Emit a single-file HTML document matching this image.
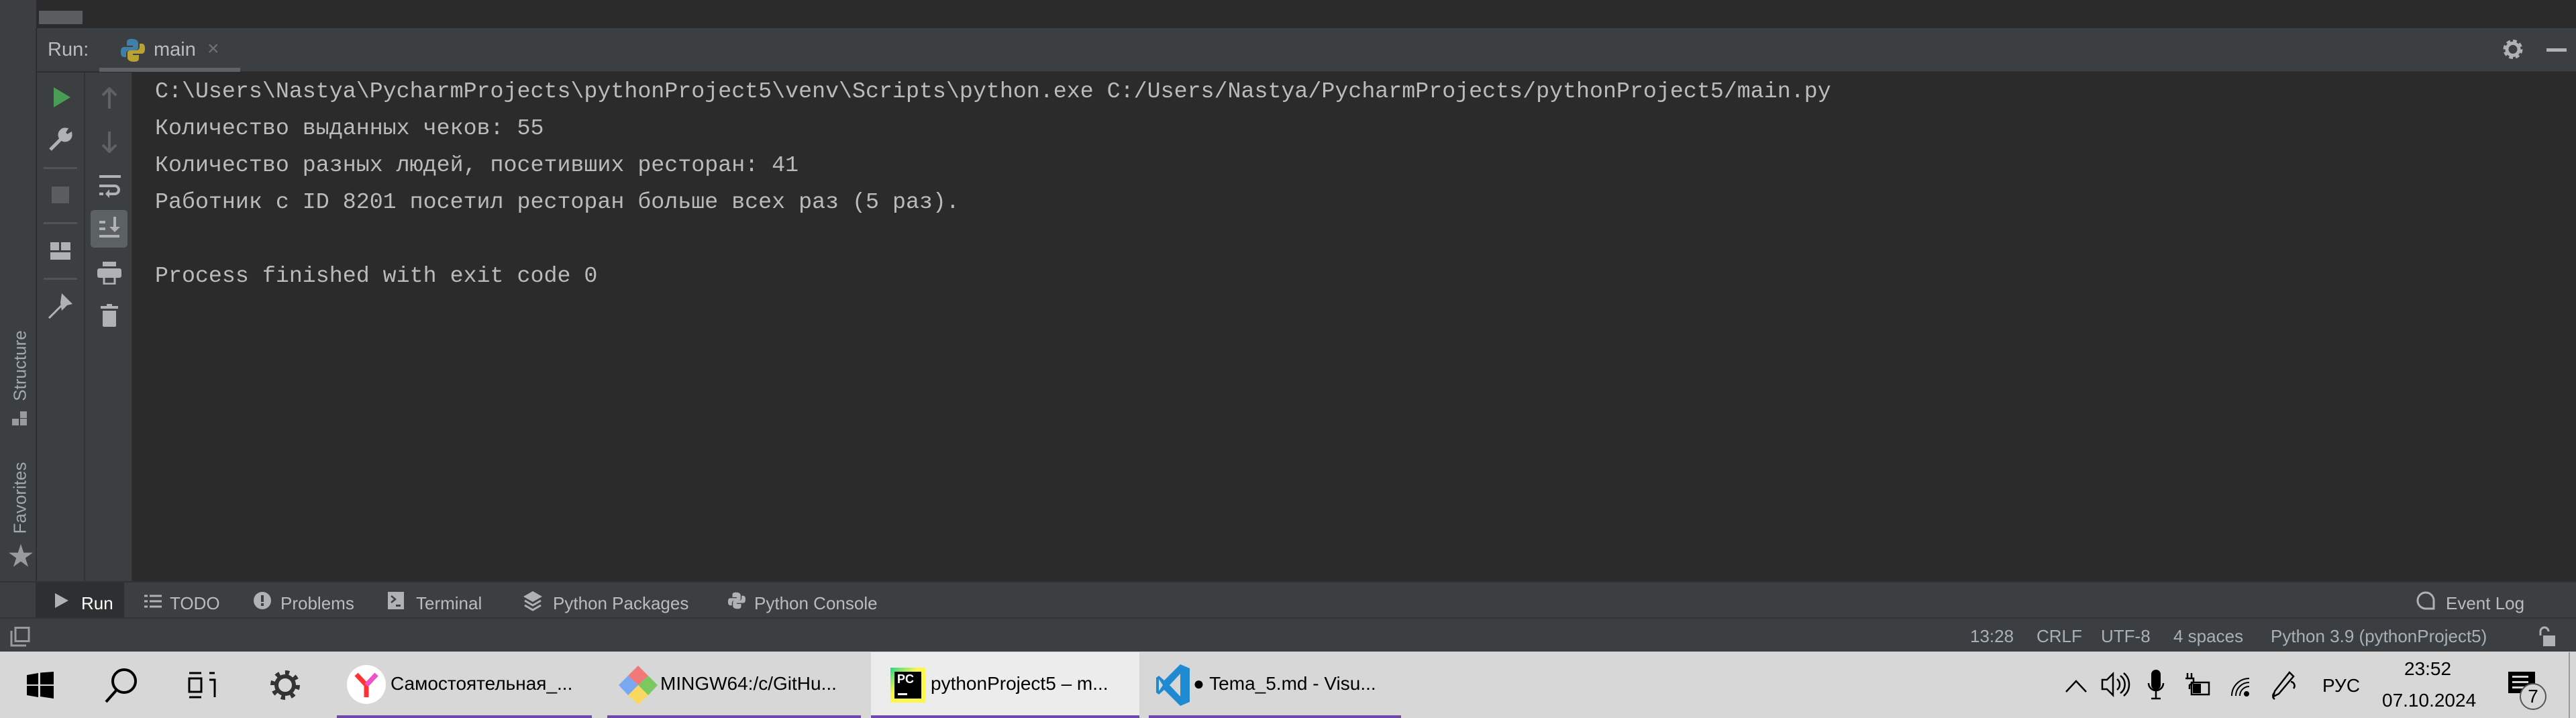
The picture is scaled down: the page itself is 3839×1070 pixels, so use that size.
<!DOCTYPE html>
<html><head><meta charset="utf-8"><style>
*{margin:0;padding:0;box-sizing:border-box}
body{width:3839px;height:1070px;overflow:hidden;background:#2b2b2b;position:relative;font-family:"Liberation Sans","Noto Sans CJK SC",sans-serif}
.a{position:absolute}
.con{position:absolute;left:231px;top:109px;font-family:"Liberation Mono","DejaVu Sans Mono",monospace;font-size:33.3px;line-height:55px;color:#bbbbbb;white-space:pre}
.ui{color:#bbbbbb;font-size:26px;white-space:nowrap}
.tb{color:#000;font-size:28px;white-space:nowrap}
.bt{top:884px}
</style></head><body>
<div class="a" style="left:0;top:0;width:54px;height:42px;background:#3c3f41"></div>
<div class="a" style="left:56px;top:0;width:3783px;height:42px;background:#2b2b2b"></div>
<div class="a" style="left:58px;top:16px;width:65px;height:20px;background:#5a5d60"></div>
<div class="a" style="left:0;top:42px;width:54px;height:825px;background:#3c3f41;border-right:1px solid #323232"></div>
<div class="a ui" style="left:30px;top:545px;transform:translate(-50%,-50%) rotate(-90deg);font-size:26px;color:#a0a8b0">Structure</div>
<div class="a" style="left:18px;top:613px;width:22px;height:22px">
 <div class="a" style="left:0;top:11px;width:10px;height:10px;background:#9a9a9a"></div>
 <div class="a" style="left:12px;top:0;width:10px;height:10px;background:#9a9a9a"></div>
 <div class="a" style="left:12px;top:11px;width:10px;height:10px;background:#9a9a9a"></div></div>
<div class="a ui" style="left:30px;top:742px;transform:translate(-50%,-50%) rotate(-90deg);font-size:26px;color:#a0a8b0">Favorites</div>
<div class="a" style="left:12px;top:798px;font-size:38px;color:#9a9a9a">★</div>
<div class="a" style="left:55px;top:42px;width:3784px;height:65px;background:#3c3f41;border-bottom:1px solid #323232"></div>
<div class="a ui" style="left:71px;top:58px;font-size:29px">Run:</div>
<svg class="a" style="left:180px;top:57px" width="36" height="36" viewBox="0 0 36 36"><path d="M17 1c-8 0-8 3-8 6v4h9v2H5c-4 0-5 3-5 8s2 7 5 7h3v-5c0-3 2-5 5-5h9c3 0 4-2 4-4V7c0-3-3-6-9-6z" fill="#3f7fa8"/><path d="M19 35c8 0 8-3 8-6v-4h-9v-2h13c4 0 5-3 5-8s-2-7-5-7h-3v5c0 3-2 5-5 5h-9c-3 0-4 2-4 4v7c0 3 3 6 9 6z" fill="#b8a231"/></svg>
<div class="a ui" style="left:229px;top:58px;font-size:29px">main</div>
<div class="a" style="left:309px;top:56px;font-size:30px;color:#6d7275">×</div>
<div class="a" style="left:148px;top:101px;width:210px;height:6px;background:#5e6266"></div>
<svg class="a" style="left:3729px;top:57px" width="32" height="33" viewBox="0 0 32 33"><circle cx="16" cy="16.5" r="11" fill="none" stroke="#afb1b3" stroke-width="7" stroke-dasharray="5 3.6"/><circle cx="16" cy="16.5" r="9" fill="none" stroke="#afb1b3" stroke-width="5"/></svg>
<div class="a" style="left:3795px;top:72px;width:30px;height:5px;background:#afb1b3"></div>
<div class="a" style="left:55px;top:108px;width:70px;height:759px;background:#3c3f41"></div>
<div class="a" style="left:125px;top:108px;width:2px;height:759px;background:#323232"></div>
<div class="a" style="left:127px;top:108px;width:70px;height:759px;background:#3c3f41;border-right:1px solid #323232"></div>
<svg class="a" style="left:80px;top:130px" width="26" height="30"><path d="M0 0L25 15L0 30Z" fill="#499c54"/></svg>
<svg class="a" style="left:72px;top:190px" width="36" height="36" viewBox="0 0 36 36"><path d="M3 33L18 18M26 3a8 8 0 1 0 7 7l-5 3-5-5z" stroke="#afb1b3" stroke-width="5" fill="#afb1b3"/></svg>
<div class="a" style="left:65px;top:249px;width:50px;height:3px;background:#515456"></div>
<div class="a" style="left:77px;top:278px;width:26px;height:25px;background:#5a5d60"></div>
<div class="a" style="left:65px;top:331px;width:50px;height:3px;background:#515456"></div>
<div class="a" style="left:75px;top:361px;width:13px;height:12px;background:#afb1b3"></div>
<div class="a" style="left:91px;top:361px;width:14px;height:12px;background:#afb1b3"></div>
<div class="a" style="left:75px;top:376px;width:30px;height:11px;background:#afb1b3"></div>
<div class="a" style="left:65px;top:414px;width:50px;height:3px;background:#515456"></div>
<svg class="a" style="left:72px;top:437px" width="36" height="38" viewBox="0 0 36 38"><path d="M20 0L36 16L28 18L20 26L18 14Z" fill="#afb1b3"/><path d="M22 16L1 37" stroke="#afb1b3" stroke-width="3"/></svg>
<svg class="a" style="left:150px;top:130px" width="26" height="32"><path d="M13 2V32M3 12L13 2L23 12" stroke="#5f6265" stroke-width="4" fill="none"/></svg>
<svg class="a" style="left:150px;top:196px" width="26" height="32"><path d="M13 0V30M3 20L13 30L23 20" stroke="#5f6265" stroke-width="4" fill="none"/></svg>
<svg class="a" style="left:147px;top:260px" width="34" height="36" viewBox="0 0 34 36"><path d="M1 3H33M1 17H24a6 6 0 0 1 0 12h-8M1 29H7" stroke="#afb1b3" stroke-width="4" fill="none"/><path d="M16 22L10 29L16 35Z" fill="#afb1b3"/></svg>
<div class="a" style="left:135px;top:313px;width:55px;height:56px;background:#5c6164;border-radius:5px"></div>
<svg class="a" style="left:147px;top:323px" width="34" height="32" viewBox="0 0 34 32"><path d="M1 8H10M1 18H10M1 29H31M24 0V20" stroke="#afb1b3" stroke-width="4" fill="none"/><path d="M16 15L24 23L32 15Z" fill="#afb1b3"/></svg>
<svg class="a" style="left:145px;top:390px" width="36" height="34" viewBox="0 0 36 34"><rect x="8" y="0" width="20" height="7" fill="#afb1b3"/><rect x="0" y="10" width="36" height="14" rx="3" fill="#afb1b3"/><rect x="10" y="20" width="16" height="13" fill="none" stroke="#afb1b3" stroke-width="3"/></svg>
<svg class="a" style="left:150px;top:453px" width="26" height="34" viewBox="0 0 26 34"><rect x="0" y="3" width="26" height="4" fill="#afb1b3"/><rect x="9" y="0" width="8" height="4" fill="#afb1b3"/><path d="M3 10H23V32a2 2 0 0 1-2 2H5a2 2 0 0 1-2-2Z" fill="#afb1b3"/></svg>
<div class="con">C:\Users\Nastya\PycharmProjects\pythonProject5\venv\Scripts\python.exe C:/Users/Nastya/PycharmProjects/pythonProject5/main.py
Количество выданных чеков: 55
Количество разных людей, посетивших ресторан: 41
Работник с ID 8201 посетил ресторан больше всех раз (5 раз).

Process finished with exit code 0</div>
<div class="a" style="left:0;top:866px;width:3839px;height:56px;background:#3c3f41;border-top:2px solid #323232;border-bottom:2px solid #323232"></div>
<div class="a" style="left:53px;top:868px;width:132px;height:52px;background:#2d2f31"></div>
<svg class="a" style="left:82px;top:884px" width="20" height="22"><path d="M0 0L20 11L0 22Z" fill="#afb1b3"/></svg>
<div class="a ui bt" style="left:121px;color:#fff">Run</div>
<svg class="a" style="left:215px;top:886px" width="26" height="20"><path d="M0 2H5M8 2H26M0 10H5M8 10H26M0 18H5M8 18H26" stroke="#afb1b3" stroke-width="3"/></svg>
<div class="a ui bt" style="left:253px">TODO</div>
<svg class="a" style="left:378px;top:882px" width="26" height="26"><circle cx="13" cy="13" r="13" fill="#afb1b3"/><rect x="11" y="5" width="4" height="10" fill="#3c3f41"/><rect x="11" y="17" width="4" height="4" fill="#3c3f41"/></svg>
<div class="a ui bt" style="left:418px">Problems</div>
<svg class="a" style="left:578px;top:882px" width="24" height="26"><rect x="0" y="0" width="24" height="26" fill="#afb1b3"/><path d="M5 6L11 11L5 16" stroke="#3c3f41" stroke-width="2.5" fill="none"/><rect x="12" y="19" width="7" height="3" fill="#3c3f41"/></svg>
<div class="a ui bt" style="left:620px">Terminal</div>
<svg class="a" style="left:780px;top:881px" width="28" height="30"><path d="M14 0L28 8L14 16L0 8Z" fill="#afb1b3"/><path d="M2 14L14 21L26 14M2 21L14 28L26 21" stroke="#afb1b3" stroke-width="3" fill="none"/></svg>
<div class="a ui bt" style="left:824px">Python Packages</div>
<svg class="a" style="left:1085px;top:882px" width="26" height="26" viewBox="0 0 36 36"><path d="M17 1c-8 0-8 3-8 6v4h9v2H5c-4 0-5 3-5 8s2 7 5 7h3v-5c0-3 2-5 5-5h9c3 0 4-2 4-4V7c0-3-3-6-9-6z" fill="#afb1b3"/><path d="M19 35c8 0 8-3 8-6v-4h-9v-2h13c4 0 5-3 5-8s-2-7-5-7h-3v5c0 3-2 5-5 5h-9c-3 0-4 2-4 4v7c0 3 3 6 9 6z" fill="#afb1b3"/></svg>
<div class="a ui bt" style="left:1124px">Python Console</div>
<svg class="a" style="left:3600px;top:881px" width="30" height="30"><path d="M15 2a12 12 0 1 0 0 24H27V14A12 12 0 0 0 15 2Z" fill="none" stroke="#afb1b3" stroke-width="3"/></svg>
<div class="a ui bt" style="left:3645px">Event Log</div>
<div class="a" style="left:0;top:922px;width:3839px;height:49px;background:#3c3f41"></div>
<svg class="a" style="left:15px;top:934px" width="30" height="30"><path d="M2 6V28H24" stroke="#9a9a9a" stroke-width="3" fill="none"/><rect x="8" y="1.5" width="20" height="20" fill="none" stroke="#9a9a9a" stroke-width="3"/></svg>
<div class="a ui" style="left:2936px;top:933px;color:#a9b0b8">13:28</div>
<div class="a ui" style="left:3035px;top:933px;color:#a9b0b8">CRLF</div>
<div class="a ui" style="left:3131px;top:933px;color:#a9b0b8">UTF-8</div>
<div class="a ui" style="left:3239px;top:933px;color:#a9b0b8">4 spaces</div>
<div class="a ui" style="left:3384px;top:933px;color:#a9b0b8">Python 3.9 (pythonProject5)</div>
<svg class="a" style="left:3782px;top:933px" width="26" height="30"><path d="M4 14V8a6 6 0 0 1 12 0" stroke="#afb1b3" stroke-width="3" fill="none"/><rect x="8" y="14" width="18" height="16" fill="#afb1b3"/></svg>
<div class="a" style="left:0;top:971px;width:3839px;height:99px;background:#d7d7d7"></div>
<svg class="a" style="left:40px;top:1001px" width="40" height="40"><path d="M0 5L17 2V19H0ZM20 1.5L40 0V19H20ZM0 21H17V38L0 35ZM20 21H40V40L20 37Z" fill="#000"/></svg>
<svg class="a" style="left:152px;top:993px" width="56" height="56"><circle cx="33" cy="22" r="17" fill="none" stroke="#000" stroke-width="4"/><path d="M22 35L6 53" stroke="#000" stroke-width="4"/></svg>
<svg class="a" style="left:280px;top:1001px" width="42" height="40"><path d="M2 2H20M2 38H20M2 10H20V30H2Z" stroke="#000" stroke-width="3" fill="none"/><path d="M32 2H40M32 12H40V38" stroke="#000" stroke-width="3" fill="none"/></svg>
<svg class="a" style="left:402px;top:998px" width="46" height="46" viewBox="0 0 46 46"><circle cx="23" cy="23" r="13" fill="none" stroke="#333" stroke-width="6"/><circle cx="23" cy="23" r="18" fill="none" stroke="#333" stroke-width="8" stroke-dasharray="6 8.1"/></svg>
<div class="a" style="left:502px;top:1066px;width:380px;height:4px;background:#7048a8"></div>
<div class="a" style="left:517px;top:991px;width:58px;height:58px;border-radius:50%;background:#fff"></div>
<svg class="a" style="left:527px;top:1001px" width="38" height="40"><path d="M4 4L19 20L34 4M19 20V38" stroke="#ff3333" stroke-width="7" fill="none"/><path d="M34 4L19 20" stroke="#f050c8" stroke-width="7"/></svg>
<div class="a tb" style="left:582px;top:1003px">Самостоятельная_...</div>
<div class="a" style="left:905px;top:1066px;width:378px;height:4px;background:#7048a8"></div>
<svg class="a" style="left:920px;top:990px" width="62" height="62" viewBox="0 0 62 62"><path d="M31 2L46 17L31 31L16 17Z" fill="#f07878"/><path d="M46 17L60 31L46 46L31 31Z" fill="#7cc860"/><path d="M31 31L46 46L31 60L16 46Z" fill="#f8d860"/><path d="M16 17L31 31L16 46L2 31Z" fill="#78a8f0"/></svg>
<div class="a tb" style="left:984px;top:1003px">MINGW64:/c/GitHu...</div>
<div class="a" style="left:1298px;top:972px;width:400px;height:98px;background:#ececec"></div>
<div class="a" style="left:1298px;top:1066px;width:400px;height:4px;background:#7048a8"></div>
<div class="a" style="left:1327px;top:995px;width:52px;height:52px;background:linear-gradient(135deg,#21d789,#fcf84a 40%,#fcf84a)"></div>
<div class="a" style="left:1333px;top:1001px;width:40px;height:40px;background:#000"></div>
<div class="a" style="left:1337px;top:1002px;font-size:18px;font-weight:bold;color:#fff">PC</div>
<div class="a" style="left:1338px;top:1033px;width:14px;height:3px;background:#fff"></div>
<div class="a tb" style="left:1387px;top:1003px">pythonProject5 – m...</div>
<div class="a" style="left:1712px;top:1066px;width:376px;height:4px;background:#7048a8"></div>
<svg class="a" style="left:1723px;top:990px" width="50" height="62" viewBox="0 0 50 62"><path d="M36 0L50 6V56L36 62L12 38L4 45L0 42V20L4 17L12 24Z" fill="#1f8ad2"/><path d="M36 14L20 31L36 48Z" fill="#d7d7d7"/><path d="M4 22L10 31L4 40Z" fill="#d7d7d7"/></svg>
<div class="a tb" style="left:1778px;top:1003px">● Tema_5.md - Visu...</div>
<svg class="a" style="left:3078px;top:1012px" width="32" height="20"><path d="M1 19L16 3L31 19" stroke="#000" stroke-width="2.5" fill="none"/></svg>
<svg class="a" style="left:3131px;top:1000px" width="44" height="40"><path d="M2 13H9L18 4V36L9 27H2Z" stroke="#000" stroke-width="2.5" fill="none"/><path d="M24 12a10 10 0 0 1 0 16M29 7a16 16 0 0 1 0 26M34 3a22 22 0 0 1 0 34" stroke="#000" stroke-width="2.5" fill="none"/></svg>
<svg class="a" style="left:3200px;top:998px" width="26" height="46"><rect x="6" y="0" width="14" height="30" rx="7" fill="#000"/><path d="M2 20a11 11 0 0 0 22 0M13 31V42M6 43H20" stroke="#000" stroke-width="2.5" fill="none"/></svg>
<svg class="a" style="left:3254px;top:1003px" width="40" height="36"><path d="M6 0V8M12 0V8M3 8H15V14L9 18V24" stroke="#000" stroke-width="2.5" fill="none"/><rect x="12" y="14" width="26" height="18" fill="none" stroke="#000" stroke-width="2.5"/><rect x="14" y="16" width="12" height="14" fill="#000"/></svg>
<svg class="a" style="left:3320px;top:1005px" width="34" height="34"><path d="M6 32a26 26 0 0 1 26-26M12 32a20 20 0 0 1 20-20M18 32a14 14 0 0 1 14-14" stroke="#000" stroke-width="2" fill="none"/><circle cx="28" cy="29" r="4" fill="#000"/></svg>
<svg class="a" style="left:3382px;top:1000px" width="42" height="44"><path d="M30 2L36 8L14 34L6 38L8 30Z" stroke="#000" stroke-width="2.5" fill="none"/><path d="M8 42a6 6 0 0 1 0-10M32 16a6 6 0 0 1 4 10" stroke="#000" stroke-width="2.5" fill="none"/></svg>
<div class="a tb" style="left:3461px;top:1006px">РУС</div>
<div class="a tb" style="left:3583px;top:981px">23:52</div>
<div class="a tb" style="left:3550px;top:1028px">07.10.2024</div>
<div class="a" style="left:3738px;top:1001px;width:40px;height:32px;background:#000"></div>
<div class="a" style="left:3744px;top:1007px;width:24px;height:3px;background:#d7d7d7"></div>
<div class="a" style="left:3744px;top:1015px;width:24px;height:3px;background:#d7d7d7"></div>
<div class="a" style="left:3744px;top:1023px;width:18px;height:3px;background:#d7d7d7"></div>
<div class="a" style="left:3755px;top:1018px;width:40px;height:40px;border-radius:50%;background:#d7d7d7;border:2px solid #555;font-size:28px;text-align:center;line-height:36px;color:#000">7</div>
<div class="a" style="left:3828px;top:972px;width:2px;height:98px;background:#999"></div>
</body></html>
